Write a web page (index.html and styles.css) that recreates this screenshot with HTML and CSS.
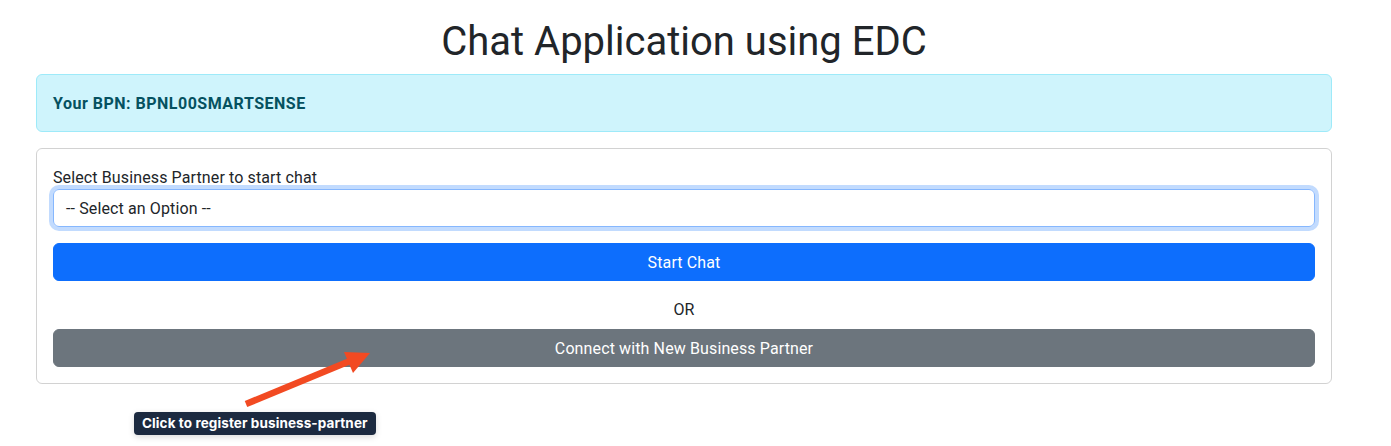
FILE: index.html
```html
<!DOCTYPE html>
<html lang="en">
<head>
<meta charset="utf-8">
<title>Chat Application using EDC</title>
<link rel="stylesheet" href="styles.css">
</head>
<body>
<main class="page">
  <h1 class="title">Chat Application using EDC</h1>
  <div class="alert">Your BPN: BPNL00SMARTSENSE</div>
  <section class="card">
    <label class="label" for="bp">Select Business Partner to start chat</label>
    <div class="select">-- Select an Option --</div>
    <button class="btn btn-primary" type="button">Start Chat</button>
    <p class="or">OR</p>
    <div class="connect-wrap">
      <button class="btn btn-secondary" type="button">Connect with New Business Partner</button>
      <svg class="arrow" width="150" height="70" viewBox="0 0 150 70" aria-hidden="true">
        <line x1="17" y1="56" x2="121" y2="13" stroke="#f24a22" stroke-width="6.5"/>
        <polygon points="141,5 115,4 124,25" fill="#f24a22"/>
      </svg>
      <div class="tooltip">Click to register business-partner</div>
    </div>
  </section>
</main>
</body>
</html>
```
FILE: styles.css
```css
* { box-sizing: border-box; }
html, body { margin: 0; padding: 0; background: #fff; }
body {
  font-family: Roboto, "Noto Sans", "Liberation Sans", sans-serif;
  font-size: 16px;
  line-height: 24px;
  color: #212529;
}
.page {
  width: 1296px;
  margin-left: 36px;
  padding-top: 18px;
  padding-bottom: 62px;
}
.title {
  margin: 0 0 8px;
  font-size: 40px;
  line-height: 48px;
  font-weight: 400;
  text-align: center;
}
.alert {
  padding: 17px 16px 15px;
  border: 1px solid #9eeaf9;
  border-radius: 6px;
  background: #cff4fc;
  color: #055160;
  font-weight: 700;
  letter-spacing: .5px;
  margin-bottom: 16px;
}
.card {
  border: 1px solid rgba(0,0,0,.175);
  border-radius: 6px;
  padding: 16px;
  display: flex;
  flex-direction: column;
  letter-spacing: .12px;
}
.label { display: block; padding-top: 1px; margin-bottom: -1px; }
.select {
  height: 38px;
  padding: 7px 12px 5px;
  border: 1px solid #86b7fe;
  border-radius: 6px;
  box-shadow: 0 0 0 4px rgba(13,110,253,.25);
  margin-bottom: 16px;
}
.btn {
  display: block;
  width: 100%;
  height: 38px;
  border: 1px solid transparent;
  border-radius: 6px;
  font: inherit;
  letter-spacing: inherit;
  color: #fff;
  text-align: center;
  padding: 7px 12px 5px;
}
.btn-primary { background: #0d6efd; border-color: #0d6efd; }
.btn-secondary { background: #6c757d; border-color: #6c757d; }
.or { margin: 17px 0 7px; text-align: center; }
.connect-wrap { position: relative; }
.arrow { position: absolute; left: 176px; top: 19px; }
.tooltip {
  position: absolute;
  left: 81px;
  top: 83px;
  padding: 3px 8px;
  background: #1c2a40;
  color: #fff;
  font-family: Inter, Roboto, sans-serif;
  font-size: 13.5px;
  line-height: 17px;
  font-weight: 700;
  letter-spacing: .1px;
  border-radius: 4px;
  white-space: nowrap;
  box-shadow: 0 2px 6px rgba(0,0,0,.15);
}
```
